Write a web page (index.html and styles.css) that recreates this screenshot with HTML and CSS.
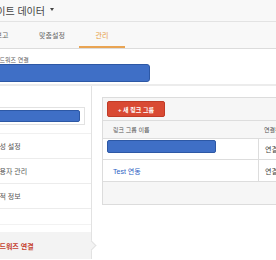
FILE: index.html
```html
<!DOCTYPE html>
<html lang="ko">
<head>
<meta charset="utf-8">
<link rel="stylesheet" href="styles.css">
</head>
<body>
<div class="app">
  <div class="topbar"><span class="title">사이트 데이터</span><span class="caret"></span></div>
  <div class="tabs">
    <div class="tab">보고</div>
    <div class="tab">맞춤설정</div>
    <div class="tab active">관리</div>
  </div>
  <div class="crumb">애드워즈 연결</div>
  <div class="hdrbar"></div>
  <div class="main">
    <div class="nav">
      <div class="nav-top"><div class="selectbox"><div class="fill"></div></div></div>
      <div class="nav-item">속성 설정</div>
      <div class="nav-item">사용자 관리</div>
      <div class="nav-item">추적 정보</div>
      <div class="nav-spacer"></div>
      <div class="nav-item selected">애드워즈 연결<span class="notch"></span></div>
    </div>
    <div class="content">
      <div class="card">
        <div class="toolbar"><div class="btn">+ 새 링크 그룹</div></div>
        <div class="row head"><div class="c1">링크 그룹 이름</div><div class="c2">연결된 계정</div></div>
        <div class="row body"><div class="c1 pad"><div class="redact"></div></div><div class="c2">연결된 계정 1개</div></div>
        <div class="row body"><div class="c1"><span class="link">Test 연동</span></div><div class="c2">연결된 계정 1개</div></div>
        <div class="foot"></div>
      </div>
    </div>
  </div>
</div>
</body>
</html>
```
FILE: styles.css
```css
html, body {
  margin: 0;
  padding: 0;
}
body {
  width: 276px;
  height: 260px;
  overflow: hidden;
  background: #fff;
  font-family: "Liberation Sans", "Noto Sans CJK KR", sans-serif;
}
.app {
  margin-left: -30px;
  width: 400px;
}
.topbar {
  height: 21px;
  background: #f8f8f8;
  border-bottom: 1px solid #e3e3e3;
  display: flex;
  align-items: center;
  padding-left: 17px;
  font-size: 10px;
  color: #444;
}
.caret {
  width: 0;
  height: 0;
  margin-left: 5px;
  margin-top: -2px;
  border-left: 2.5px solid transparent;
  border-right: 2.5px solid transparent;
  border-top: 3px solid #444;
}
.tabs {
  height: 26px;
  display: flex;
  gap: 4px;
  padding-left: 9px;
  background: #f8f8f8;
  border-bottom: 1px solid #dcdcdc;
}
.tab {
  width: 46px;
  flex-shrink: 0;
  box-sizing: border-box;
  display: flex;
  align-items: center;
  justify-content: center;
  font-size: 7px;
  color: #666;
  border-bottom: 2px solid transparent;
  padding-top: 1px;
}
.tab.active {
  color: #e69a3c;
  border-bottom-color: #e9a453;
}
.crumb {
  font-size: 6px;
  line-height: 8px;
  color: #666;
  padding: 7px 0 0 24px;
}
.hdrbar {
  margin-left: 10px;
  width: 170px;
  height: 18px;
  box-sizing: border-box;
  background: #3f6fc6;
  border: 1px solid #2d58a5;
  border-radius: 3px;
}
.main {
  margin-top: 2px;
  border-top: 2px solid #ececec;
  display: flex;
}
.nav {
  width: 121px;
  flex-shrink: 0;
  border-right: 1px solid #e2e2e2;
}
.nav-top {
  height: 48px;
  padding-top: 21px;
  box-sizing: border-box;
  border-bottom: 1px solid #f0f0f0;
}
.selectbox {
  margin-left: 14px;
  width: 101px;
  height: 18px;
  box-sizing: border-box;
  border: 1px solid #e2e2e2;
  padding: 2px 4px 2px 2px;
}
.fill {
  height: 12px;
  background: #3f6fc6;
  border: 1px solid #2d58a5;
  border-radius: 2px;
  box-sizing: border-box;
}
.nav-item {
  height: 24px;
  border-bottom: 1px solid #ececec;
  padding-left: 23px;
  display: flex;
  align-items: center;
  font-size: 7px;
  color: #555;
}
.nav-spacer {
  height: 15px;
  border-bottom: 1px solid #f2f2f2;
}
.nav-item.selected {
  position: relative;
  margin-top: 7px;
  height: 27px;
  border-bottom: none;
  background: #f3f3f3;
  color: #c5402d;
  font-weight: bold;
}
.notch {
  position: absolute;
  right: -4px;
  top: 10px;
  width: 6px;
  height: 6px;
  background: #f3f3f3;
  border-top: 1px solid #e2e2e2;
  border-right: 1px solid #e2e2e2;
  transform: rotate(45deg);
}
.content {
  flex: 1;
  padding: 11px 0 0 10px;
}
.card {
  width: 220px;
  border: 1px solid #dcdcdc;
  background: #f6f6f6;
}
.toolbar {
  height: 22px;
  padding: 3px 4px;
  box-sizing: border-box;
}
.btn {
  width: 58px;
  height: 16px;
  box-sizing: border-box;
  background: #d94a33;
  border: 1px solid #c03b27;
  border-radius: 2px;
  color: #fff;
  font-size: 6px;
  font-weight: bold;
  display: flex;
  align-items: center;
  justify-content: center;
}
.row {
  display: grid;
  grid-template-columns: 155px 1fr;
  border-top: 1px solid #dddddd;
  font-size: 7px;
  color: #444;
}
.row.head {
  height: 17px;
  font-size: 6px;
  color: #555;
}
.row.body {
  background: #fff;
  height: 20px;
}
.row.body + .row.body {
  height: 21px;
}
.c1 {
  padding-left: 10px;
  display: flex;
  align-items: center;
}
.c2 {
  padding-left: 6px;
  display: flex;
  align-items: center;
  white-space: nowrap;
  overflow: hidden;
}
.row.body .c2 {
  border-left: 1px solid #dddddd;
}
.c1.pad {
  padding-left: 4px;
  align-items: flex-start;
}
.redact {
  margin-top: 1px;
  width: 109px;
  height: 13px;
  box-sizing: border-box;
  background: #3f6fc6;
  border: 1px solid #2d58a5;
  border-radius: 2px;
}
.link {
  color: #2d62c4;
}
.foot {
  height: 22px;
  border-top: 1px solid #dddddd;
}
```
